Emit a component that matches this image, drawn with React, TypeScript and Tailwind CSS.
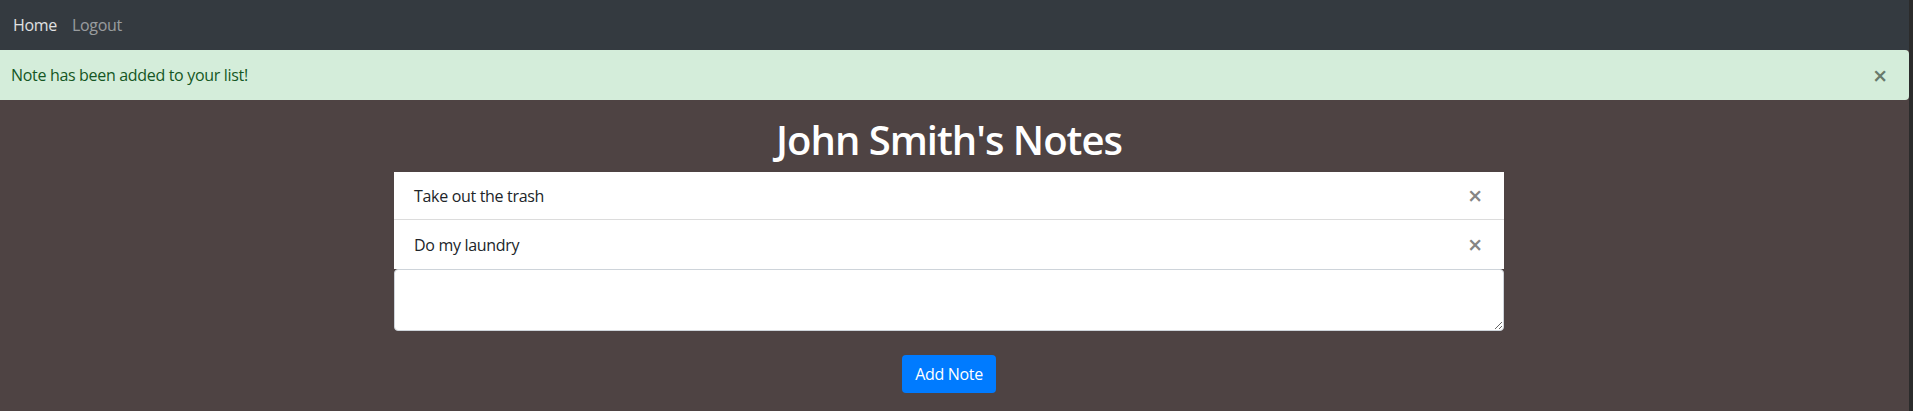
import React from "react";

const font = { fontFamily: '"Open Sans", "Noto Sans", "Liberation Sans", sans-serif' };

function CloseX({ className }: { className: string }) {
  return <span className={className}>×</span>;
}

export default function App() {
  return (
    <div className="flex w-full min-h-[411px] bg-[#4e4343] tracking-[-0.02em]" style={font}>
      <div className="flex-1 flex flex-col">
        <nav className="h-[50px] bg-[#343a40] flex items-center pl-[13px] gap-[15px] text-[16px]">
          <span className="text-white/85">Home</span>
          <span className="text-white/50">Logout</span>
        </nav>
        <div className="h-[50px] bg-[#d4edda] text-[#155724] rounded-r-[4px] flex items-center justify-between pl-[11px] pr-[22px] text-[16px]">
          <span>Note has been added to your list!</span>
          <CloseX className="text-[25px] font-semibold leading-none text-[#687a6c]" />
        </div>
        <div className="flex flex-col items-center pr-[11px]">
          <h1 className="text-white text-[40px] font-semibold leading-[48px] mt-[16px] mb-[8px] tracking-[-0.025em]">
            John Smith's Notes
          </h1>
          <div className="w-[1110px] flex flex-col">
            <div className="h-[48px] bg-white flex items-center justify-between px-[20px] border-b border-[#dcdcdc] text-[#212529] text-[16px]">
              <span>Take out the trash</span>
              <CloseX className="text-[25px] font-semibold leading-none text-[#858585] mr-[2px]" />
            </div>
            <div className="h-[49px] bg-white flex items-center justify-between px-[20px] text-[#212529] text-[16px]">
              <span>Do my laundry</span>
              <CloseX className="text-[25px] font-semibold leading-none text-[#858585] mr-[2px]" />
            </div>
            <textarea className="h-[62px] bg-white border border-[#ced4da] rounded-[4px] block w-full px-3 py-1.5 outline-none" />
          </div>
          <button className="mt-[24px] h-[38px] w-[94px] bg-[#007bff] text-white rounded-[4px] text-[16px]">
            Add Note
          </button>
        </div>
      </div>
      <div className="w-[4px] bg-[#2b2b2b]" />
    </div>
  );
}
